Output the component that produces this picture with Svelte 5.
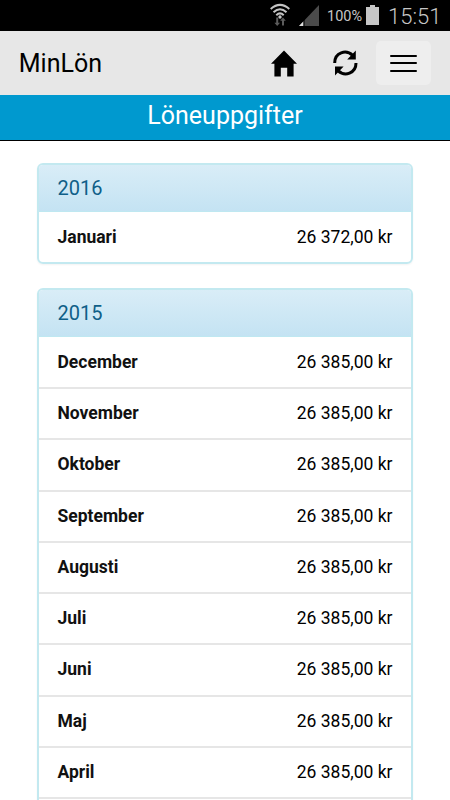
<script lang="ts">
  interface Payment {
    month: string;
    amount: string;
  }

  interface Year {
    year: number;
    payments: Payment[];
  }

  const months2015 = [
    "December",
    "November",
    "Oktober",
    "September",
    "Augusti",
    "Juli",
    "Juni",
    "Maj",
    "April",
  ];

  const years: Year[] = [
    { year: 2016, payments: [{ month: "Januari", amount: "26 372,00 kr" }] },
    {
      year: 2015,
      payments: months2015.map((month) => ({ month, amount: "26 385,00 kr" })),
    },
  ];
</script>

<div class="screen">
  <div class="status">
    <svg class="status__wifi" viewBox="0 0 20 24" width="20" height="24">
      <g fill="none" stroke="#c4c4c4" stroke-width="2">
        <path d="M.7 5.9Q10-2.2 19.3 5.9" />
        <path d="M3.5 9.2Q10 3.2 16.5 9.2" />
        <path d="M6.3 12.2Q10 8.6 13.7 12.2" />
      </g>
      <circle cx="10" cy="14" r="1.7" fill="#c4c4c4" />
      <path
        d="M6.2 14.5h2v5.2h1.9L7.2 23 4.4 19.7h1.8zM14 22.5h-2v-4.7h-1.8L13 14.6l2.8 3.2H14z"
        fill="#5c5c5c"
      />
    </svg>
    <svg class="status__signal" viewBox="0 0 20 21" width="20" height="21">
      <path d="M20 0v21H0z" fill="#4b4b4b" />
      <path d="M4.5 16.3V21H0z" fill="#e0e0e0" />
      <path d="M5 14v7" stroke="#000" stroke-width="1" />
    </svg>
    <span class="status__percent">100%</span>
    <svg class="status__battery" viewBox="0 0 13 20" width="13" height="20">
      <path d="M4 0h5v2h4v18H0V2h4z" fill="#c6c6c6" />
    </svg>
    <span class="status__clock">15:51</span>
  </div>

  <header class="navbar">
    <span class="navbar__brand">MinLön</span>
    <button class="navbar__home" aria-label="Hem">
      <svg viewBox="0 0 26 27" width="26" height="27">
        <path d="M13 .5L26 13.7H22.6V26.5H16.2V17.8H9.8V26.5H3.4V13.7H0z" />
      </svg>
    </button>
    <button class="navbar__refresh" aria-label="Uppdatera">
      <svg viewBox="0 0 25 26" width="25" height="26">
        <g fill="none" stroke="#000" stroke-width="3">
          <path d="M1.7 12.9C1.7 2.5 13-1 19.7 5.4" />
          <path d="M23 13.1C23 23.5 11.7 27 5 20.6" />
        </g>
        <path d="M22.8.4v9h-8.6zM2 25.6v-9h8.6z" />
      </svg>
    </button>
    <button class="navbar__toggle" aria-label="Meny">
      <span></span>
      <span></span>
      <span></span>
    </button>
  </header>

  <h1 class="title">Löneuppgifter</h1>

  <main class="content">
    {#each years as { year, payments }}
      <section class="panel">
        <h2 class="panel__heading">{year}</h2>
        <ul class="panel__list">
          {#each payments as payment}
            <li class="panel__row">
              <strong>{payment.month}</strong>
              <span>{payment.amount}</span>
            </li>
          {/each}
        </ul>
      </section>
    {/each}
  </main>
</div>

<style>
  :global(body) {
    background: #fff;
  }

  .screen {
    display: flex;
    flex-direction: column;
    height: 800px;
    overflow: hidden;
    box-sizing: border-box;
    background: #fff;
    color: #000;
    font-family: Roboto, "Liberation Sans", sans-serif;
  }

  .status {
    display: flex;
    align-items: flex-start;
    justify-content: flex-end;
    flex: none;
    height: 31px;
    padding-right: 8px;
    box-sizing: border-box;
    background: #000;
    color: #c6c6c6;
  }

  .status__wifi {
    margin: 3px 9px 0 0;
  }

  .status__signal {
    margin: 5px 8px 0 0;
  }

  .status__percent {
    width: 35px;
    margin: 7px 4px 0 0;
    font-size: 14.5px;
    line-height: 20px;
  }

  .status__battery {
    margin: 5px 9px 0 0;
  }

  .status__clock {
    width: 54px;
    font-size: 22px;
    font-weight: 300;
    line-height: 34px;
    white-space: nowrap;
  }

  .navbar {
    display: flex;
    align-items: center;
    flex: none;
    height: 64px;
    padding: 0 19px 0 18.75px;
    box-sizing: border-box;
    background: #e7e7e7;
  }

  .navbar__brand {
    margin-right: auto;
    padding-top: 1px;
    font-size: 25px;
    line-height: 30px;
  }

  .navbar button {
    padding: 0;
    border: 0;
    background: none;
  }

  .navbar svg {
    display: block;
  }

  .navbar .navbar__home {
    margin-right: 36px;
  }

  .navbar .navbar__refresh {
    margin-right: 18.5px;
  }

  .navbar .navbar__toggle {
    display: flex;
    flex-direction: column;
    align-items: center;
    justify-content: center;
    gap: 5.5px;
    width: 55px;
    height: 44px;
    border-radius: 5px;
    background: #eee;
  }

  .navbar__toggle span {
    width: 27.5px;
    height: 2px;
    border-radius: 1px;
    background: #000;
  }

  .title {
    flex: none;
    height: 46px;
    margin: 0;
    border-bottom: 1px solid #000;
    box-sizing: border-box;
    background: #0099cf;
    color: #fff;
    font-size: 25px;
    font-weight: 400;
    line-height: 41px;
    text-align: center;
  }

  .content {
    flex: 1;
    min-height: 0;
    padding: 22px 37px 0;
  }

  .panel {
    margin-bottom: 24px;
    border: 2px solid #c3e9f0;
    border-radius: 6px;
    box-shadow: 0 1px 2px rgba(0, 0, 0, 0.05);
    overflow: hidden;
  }

  /* the list continues below the fold */
  .panel:last-child {
    padding-bottom: 50px;
  }

  .panel__heading {
    height: 47px;
    margin: 0;
    padding: 0 18.5px;
    border-bottom: 1px solid #bfe8f1;
    box-sizing: border-box;
    background: linear-gradient(#d9edf7, #c4e3f3);
    color: #0f5f88;
    font-size: 20px;
    font-weight: 400;
    line-height: 47px;
  }

  .panel__list {
    margin: 0;
    padding: 0;
    list-style: none;
  }

  .panel__row {
    display: flex;
    justify-content: space-between;
    height: 51.25px;
    padding: 0 18.5px;
    border-bottom: 2px solid #e6e6e6;
    box-sizing: border-box;
    font-size: 17.5px;
    line-height: 49.5px;
  }

  .panel__row:first-child {
    height: 52px;
    line-height: 51px;
  }

  .panel__row:only-child {
    height: 50px;
    border-bottom: 0;
  }

  .panel__row strong {
    color: #111;
    font-weight: 700;
  }
</style>
